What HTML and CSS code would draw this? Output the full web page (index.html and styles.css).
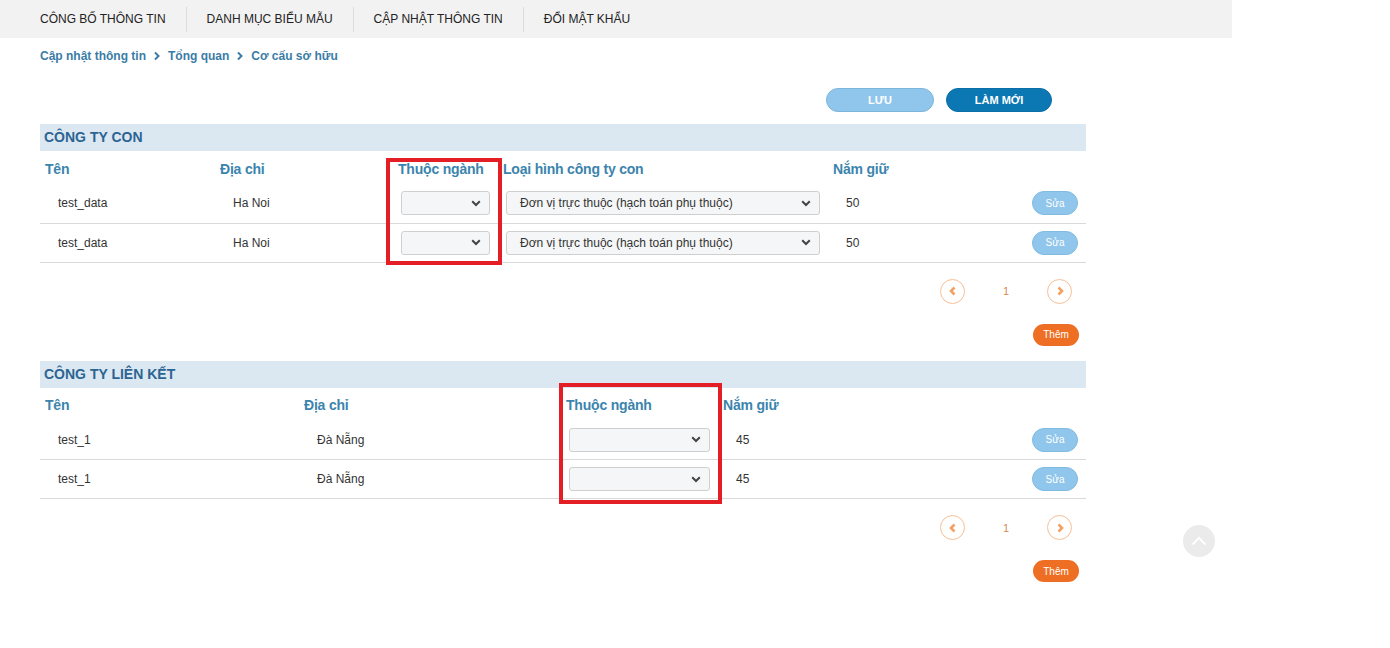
FILE: index.html
```html
<!DOCTYPE html>
<html lang="vi">
<head>
<meta charset="utf-8">
<title>Cơ cấu sở hữu</title>
<link rel="stylesheet" href="styles.css">
</head>
<body>
<nav class="topnav">
  <a class="nav-item">CÔNG BỐ THÔNG TIN</a>
  <a class="nav-item">DANH MỤC BIỂU MẪU</a>
  <a class="nav-item">CẬP NHẬT THÔNG TIN</a>
  <a class="nav-item">ĐỔI MẬT KHẨU</a>
</nav>

<main class="page">
  <div class="breadcrumb">
    <span>Cập nhật thông tin</span>
    <svg class="crumb-sep" width="8" height="10" viewBox="0 0 8 10"><path d="M2 1.5 L5.5 5 L2 8.5" fill="none" stroke="#3a7ca5" stroke-width="2"/></svg>
    <span>Tổng quan</span>
    <svg class="crumb-sep" width="8" height="10" viewBox="0 0 8 10"><path d="M2 1.5 L5.5 5 L2 8.5" fill="none" stroke="#3a7ca5" stroke-width="2"/></svg>
    <span>Cơ cấu sở hữu</span>
  </div>

  <div class="actions">
    <button class="btn btn-save">LƯU</button>
    <button class="btn btn-reset">LÀM MỚI</button>
  </div>

  <section class="block">
    <h2 class="block-title">CÔNG TY CON</h2>
    <div class="table-wrap">
      <table class="grid grid-con">
        <colgroup>
          <col class="c-ten1"><col class="c-dc1"><col class="c-tn1"><col class="c-lh1"><col class="c-ng1"><col>
        </colgroup>
        <thead>
          <tr><th>Tên</th><th>Địa chỉ</th><th>Thuộc ngành</th><th>Loại hình công ty con</th><th>Nắm giữ</th><th></th></tr>
        </thead>
        <tbody>
          <tr>
            <td class="txt">test_data</td>
            <td class="txt">Ha Noi</td>
            <td class="sel"><div class="select"><span class="select-val"></span><svg width="10" height="7" viewBox="0 0 10 7"><path d="M1.2 1.2 L5 5 L8.8 1.2" fill="none" stroke="#444" stroke-width="2"/></svg></div></td>
            <td class="sel"><div class="select"><span class="select-val">Đơn vị trực thuộc (hạch toán phụ thuộc)</span><svg width="10" height="7" viewBox="0 0 10 7"><path d="M1.2 1.2 L5 5 L8.8 1.2" fill="none" stroke="#444" stroke-width="2"/></svg></div></td>
            <td class="txt">50</td>
            <td class="act"><button class="btn-edit">Sửa</button></td>
          </tr>
          <tr>
            <td class="txt">test_data</td>
            <td class="txt">Ha Noi</td>
            <td class="sel"><div class="select"><span class="select-val"></span><svg width="10" height="7" viewBox="0 0 10 7"><path d="M1.2 1.2 L5 5 L8.8 1.2" fill="none" stroke="#444" stroke-width="2"/></svg></div></td>
            <td class="sel"><div class="select"><span class="select-val">Đơn vị trực thuộc (hạch toán phụ thuộc)</span><svg width="10" height="7" viewBox="0 0 10 7"><path d="M1.2 1.2 L5 5 L8.8 1.2" fill="none" stroke="#444" stroke-width="2"/></svg></div></td>
            <td class="txt">50</td>
            <td class="act"><button class="btn-edit">Sửa</button></td>
          </tr>
        </tbody>
      </table>
      <div class="mark mark-con"></div>
    </div>
    <div class="pager">
      <span class="pg-btn"><svg width="10" height="10" viewBox="0 0 10 10"><path d="M6.5 1.5 L3 5 L6.5 8.5" fill="none" stroke="#f4a062" stroke-width="2.6"/></svg></span>
      <span class="pg-num">1</span>
      <span class="pg-btn"><svg width="10" height="10" viewBox="0 0 10 10"><path d="M3.5 1.5 L7 5 L3.5 8.5" fill="none" stroke="#f4a062" stroke-width="2.6"/></svg></span>
    </div>
    <div class="add-row"><button class="btn-add">Thêm</button></div>
  </section>

  <section class="block">
    <h2 class="block-title">CÔNG TY LIÊN KẾT</h2>
    <div class="table-wrap">
      <table class="grid grid-lk">
        <colgroup>
          <col class="c-ten2"><col class="c-dc2"><col class="c-tn2"><col class="c-ng2"><col>
        </colgroup>
        <thead>
          <tr><th>Tên</th><th>Địa chỉ</th><th>Thuộc ngành</th><th>Nắm giữ</th><th></th></tr>
        </thead>
        <tbody>
          <tr>
            <td class="txt">test_1</td>
            <td class="txt">Đà Nẵng</td>
            <td class="sel"><div class="select"><span class="select-val"></span><svg width="10" height="7" viewBox="0 0 10 7"><path d="M1.2 1.2 L5 5 L8.8 1.2" fill="none" stroke="#444" stroke-width="2"/></svg></div></td>
            <td class="txt">45</td>
            <td class="act"><button class="btn-edit">Sửa</button></td>
          </tr>
          <tr>
            <td class="txt">test_1</td>
            <td class="txt">Đà Nẵng</td>
            <td class="sel"><div class="select"><span class="select-val"></span><svg width="10" height="7" viewBox="0 0 10 7"><path d="M1.2 1.2 L5 5 L8.8 1.2" fill="none" stroke="#444" stroke-width="2"/></svg></div></td>
            <td class="txt">45</td>
            <td class="act"><button class="btn-edit">Sửa</button></td>
          </tr>
        </tbody>
      </table>
      <div class="mark mark-lk"></div>
    </div>
    <div class="pager">
      <span class="pg-btn"><svg width="10" height="10" viewBox="0 0 10 10"><path d="M6.5 1.5 L3 5 L6.5 8.5" fill="none" stroke="#f4a062" stroke-width="2.6"/></svg></span>
      <span class="pg-num">1</span>
      <span class="pg-btn"><svg width="10" height="10" viewBox="0 0 10 10"><path d="M3.5 1.5 L7 5 L3.5 8.5" fill="none" stroke="#f4a062" stroke-width="2.6"/></svg></span>
    </div>
    <div class="add-row"><button class="btn-add">Thêm</button></div>
  </section>
</main>

<a class="to-top"><svg width="16" height="10" viewBox="0 0 16 10"><path d="M1.5 8.5 L8 2 L14.5 8.5" fill="none" stroke="#ffffff" stroke-width="2"/></svg></a>
</body>
</html>
```

FILE: styles.css
```css
* { box-sizing: border-box; }

body {
  margin: 0;
  font-family: "Liberation Sans", Arial, sans-serif;
  color: #333;
  background: #fff;
}

.topnav {
  width: 1232px;
  height: 38px;
  background: #f2f2f2;
  display: flex;
  align-items: center;
  padding-left: 20px;
}

.nav-item {
  font-size: 12px;
  color: #222;
  padding: 0 20px;
  line-height: 25px;
  border-left: 1px solid #dcdcdc;
}

.nav-item:first-child { border-left: none; }

.page {
  width: 1046px;
  margin-left: 40px;
}

.breadcrumb {
  display: flex;
  align-items: center;
  gap: 7px;
  height: 36px;
  font-size: 12px;
  font-weight: bold;
  color: #3a7ca5;
}

.actions {
  display: flex;
  justify-content: flex-end;
  gap: 12px;
  padding-right: 34px;
  margin-top: 14px;
  height: 24px;
}

.btn {
  height: 24px;
  border-radius: 12px;
  font-family: "Liberation Sans", Arial, sans-serif;
  font-size: 11px;
  font-weight: bold;
  color: #fff;
  padding: 0;
  cursor: pointer;
}

.btn-save {
  width: 108px;
  background: #90c6eb;
  border: 1px solid #7bb6df;
}

.btn-reset {
  width: 106px;
  background: #0b78b4;
  border: 1px solid #0a6fa7;
}

.block { margin-top: 12px; }
.block + .block { margin-top: 15px; }

.block-title {
  margin: 0;
  height: 27px;
  line-height: 27px;
  padding-left: 4px;
  background: #dce8f1;
  font-size: 14px;
  font-weight: bold;
  color: #2c6493;
}

.table-wrap { position: relative; }

.grid {
  width: 100%;
  border-collapse: collapse;
  table-layout: fixed;
}

.c-ten1 { width: 175px; }
.c-dc1 { width: 178px; }
.c-tn1 { width: 105px; }
.c-lh1 { width: 330px; }
.c-ng1 { width: 150px; }

.c-ten2 { width: 259px; }
.c-dc2 { width: 262px; }
.c-tn2 { width: 157px; }
.c-ng2 { width: 200px; }

.grid th {
  height: 33px;
  padding: 2px 0 0 5px;
  text-align: left;
  font-size: 14px;
  font-weight: bold;
  color: #3b84ad;
  white-space: nowrap;
  letter-spacing: -0.2px;
}

.grid td {
  height: 39px;
  border-bottom: 1px solid #d9d9d9;
  font-size: 12px;
  color: #333;
  vertical-align: middle;
}

.grid td.txt { padding-left: 18px; }
.grid td.sel { padding: 0 8px; }
.grid td.act { text-align: right; padding-right: 8px; }

.select {
  height: 24px;
  border: 1px solid #cfcfcf;
  border-radius: 3px;
  background: #f5f6f7;
  display: flex;
  align-items: center;
  justify-content: space-between;
  padding: 0 8px 0 13px;
}

.select-val {
  font-size: 12px;
  color: #333;
  white-space: nowrap;
}

.btn-edit {
  width: 46px;
  height: 24px;
  border-radius: 12px;
  background: #90c6eb;
  border: 1px solid #80bbe2;
  color: #fff;
  font-family: "Liberation Sans", Arial, sans-serif;
  font-size: 10px;
  padding: 0;
  vertical-align: middle;
}

.mark {
  position: absolute;
  border: 4px solid #e31e24;
}

.mark-con { left: 346px; top: 7px; width: 116px; height: 107px; }
.mark-lk { left: 519px; top: -5px; width: 163px; height: 121px; }

.pager {
  display: flex;
  justify-content: flex-end;
  align-items: center;
  padding-right: 14px;
  margin-top: 16px;
  height: 25px;
}

.pg-btn {
  width: 25px;
  height: 25px;
  border-radius: 50%;
  border: 1px solid #f7bf95;
  display: flex;
  align-items: center;
  justify-content: center;
}

.pg-num {
  width: 82px;
  text-align: center;
  font-size: 11px;
  color: #d88a4f;
}

.add-row {
  display: flex;
  justify-content: flex-end;
  padding-right: 7px;
  margin-top: 20px;
}

.btn-add {
  width: 46px;
  height: 22px;
  border-radius: 11px;
  border: none;
  background: #ee6f24;
  color: #fff;
  font-family: "Liberation Sans", Arial, sans-serif;
  font-size: 10px;
  padding: 0;
}

.to-top {
  position: fixed;
  left: 1183px;
  top: 525px;
  width: 32px;
  height: 32px;
  border-radius: 50%;
  background: #ebebeb;
  display: flex;
  align-items: center;
  justify-content: center;
}
```
